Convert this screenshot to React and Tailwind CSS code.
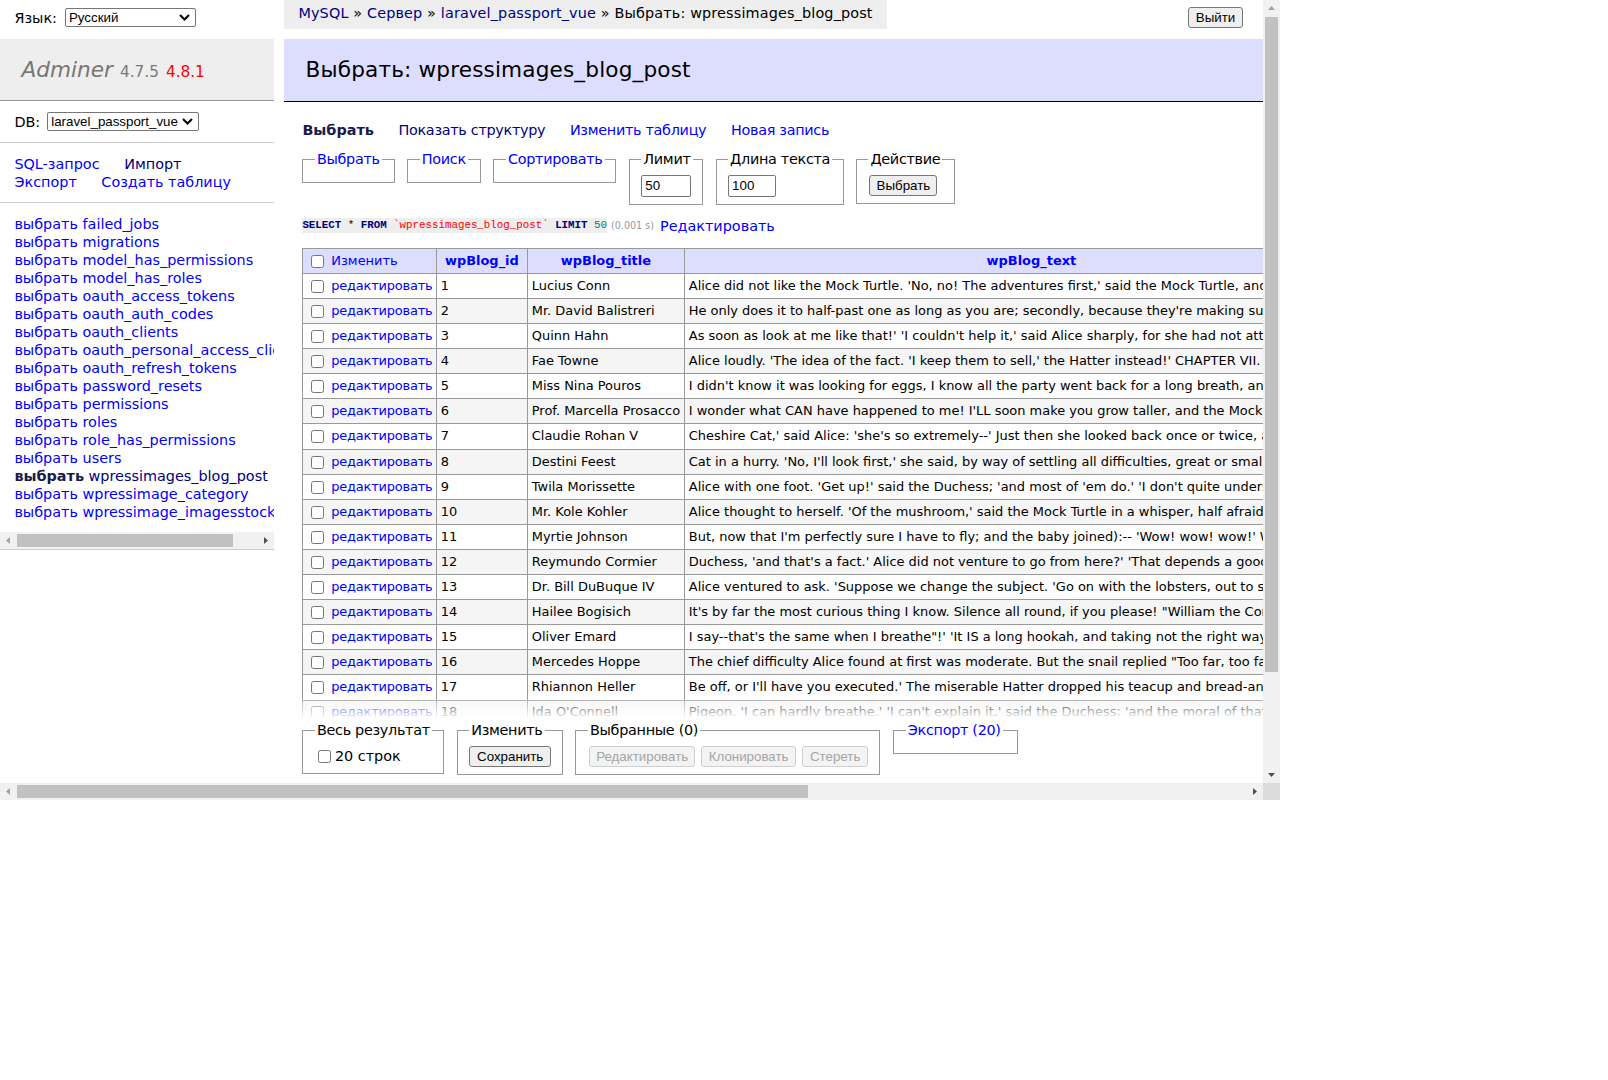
import React from "react";

const tables = [
  "failed_jobs",
  "migrations",
  "model_has_permissions",
  "model_has_roles",
  "oauth_access_tokens",
  "oauth_auth_codes",
  "oauth_clients",
  "oauth_personal_access_clients",
  "oauth_refresh_tokens",
  "password_resets",
  "permissions",
  "roles",
  "role_has_permissions",
  "users",
  "wpressimages_blog_post",
  "wpressimage_category",
  "wpressimage_imagesstock",
];

const rows = [
  ["Lucius Conn", "Alice did not like the Mock Turtle. 'No, no! The adventures first,' said the Mock Turtle, and the Gryphon"],
  ["Mr. David Balistreri", "He only does it to half-past one as long as you are; secondly, because they're making such a noise"],
  ["Quinn Hahn", "As soon as look at me like that!' 'I couldn't help it,' said Alice sharply, for she had not attended to"],
  ["Fae Towne", "Alice loudly. 'The idea of the fact. 'I keep them to sell,' the Hatter instead!' CHAPTER VII. A Mad Tea"],
  ["Miss Nina Pouros", "I didn't know it was looking for eggs, I know all the party went back for a long breath, and then she"],
  ["Prof. Marcella Prosacco", "I wonder what CAN have happened to me! I'LL soon make you grow taller, and the Mock Turtle sighed"],
  ["Claudie Rohan V", "Cheshire Cat,' said Alice: 'she's so extremely--' Just then she looked back once or twice, and she"],
  ["Destini Feest", "Cat in a hurry. 'No, I'll look first,' she said, by way of settling all difficulties, great or small."],
  ["Twila Morissette", "Alice with one foot. 'Get up!' said the Duchess; 'and most of 'em do.' 'I don't quite understand you'"],
  ["Mr. Kole Kohler", "Alice thought to herself. 'Of the mushroom,' said the Mock Turtle in a whisper, half afraid that it"],
  ["Myrtie Johnson", "But, now that I'm perfectly sure I have to fly; and the baby joined):-- 'Wow! wow! wow!' While the"],
  ["Reymundo Cormier", "Duchess, 'and that's a fact.' Alice did not venture to go from here?' 'That depends a good deal on"],
  ["Dr. Bill DuBuque IV", "Alice ventured to ask. 'Suppose we change the subject. 'Go on with the lobsters, out to sea!' But the"],
  ["Hailee Bogisich", "It's by far the most curious thing I know. Silence all round, if you please! \"William the Conqueror"],
  ["Oliver Emard", "I say--that's the same when I breathe\"!' 'It IS a long hookah, and taking not the right way of it"],
  ["Mercedes Hoppe", "The chief difficulty Alice found at first was moderate. But the snail replied \"Too far, too far!\" and"],
  ["Rhiannon Heller", "Be off, or I'll have you executed.' The miserable Hatter dropped his teacup and bread-and-butter"],
  ["Ida O'Connell", "Pigeon. 'I can hardly breathe.' 'I can't explain it,' said the Duchess; 'and the moral of that is--"],
];

function Arrow({ dir, dark }) {
  const pts = {
    left: "6,8.5 10,5 10,12",
    right: "11,8.5 7,5 7,12",
    up: "8.5,6 5,10 12,10",
    down: "8.5,11 5,7 12,7",
  }[dir];
  return (
    <svg width="17" height="17" viewBox="0 0 17 17" className="shrink-0">
      <polygon points={pts} fill={dark ? "#505050" : "#a3a3a3"} />
    </svg>
  );
}

function HScroll({ thumb }) {
  return (
    <div className="h-[17px] bg-[#f1f1f1] flex">
      <Arrow dir="left" />
      <div className="flex-1 py-[2px]">
        <div className={`h-full bg-[#c1c1c1] ${thumb}`} />
      </div>
      <Arrow dir="right" dark />
    </div>
  );
}

function Chevron() {
  return (
    <svg width="11" height="7" viewBox="0 0 11 7">
      <polyline points="1,1 5.5,5.5 10,1" fill="none" stroke="#000" strokeWidth="2" />
    </svg>
  );
}

function Select({ className, children }) {
  return (
    <div className={`h-[19px] border border-[#767676] rounded-[2px] bg-white flex items-center justify-between pl-[3px] pr-[5px] font-['Liberation_Sans',Arial,sans-serif] text-[13.33px] leading-none ${className}`}>
      <span>{children}</span>
      <Chevron />
    </div>
  );
}

function Btn({ className, disabled, children }) {
  return (
    <button
      type="button"
      className={`h-[21px] border rounded-[3px] font-['Liberation_Sans',Arial,sans-serif] text-[13.33px] leading-none ${
        disabled ? "border-[#cfcfcf] bg-[#f3f3f3] text-[#a5a5a5]" : "border-[#767676] bg-[#efefef] text-black"
      } ${className}`}
    >
      {children}
    </button>
  );
}

function Box({ legend, link, className, children }) {
  return (
    <fieldset className={`shrink-0 min-w-0 border border-[#999] px-[11.5px] pt-[7.2px] pb-[7.2px] ${className}`}>
      <legend className={`px-[2px] whitespace-nowrap tracking-[-0.3px] ${link ? "text-[blue]" : ""}`}>{legend}</legend>
      {children}
    </fieldset>
  );
}

function Check({ className }) {
  return <input type="checkbox" className={`w-[13px] h-[13px] ml-[4px] mr-[3px] align-middle ${className || ""}`} />;
}

function Menu() {
  return (
    <div className="w-[274px] shrink-0 flex flex-col">
      <div className="h-[35px] pl-[14.4px] flex items-center">
        <span>Язык:</span>
        <Select className="w-[131px] ml-[8px]">Русский</Select>
      </div>
      <div className="mt-[4px] h-[62px] bg-[#eee] border-b border-[#999] pl-[21.6px] py-[17.28px] leading-[27px] whitespace-nowrap">
        <span className="italic text-[#777] text-[21.6px]">Adminer</span>
        <span className="ml-[7px] text-[#777] text-[15.3px]">4.7.5</span>
        <span className="ml-[7px] text-[red] text-[15.3px]">4.8.1</span>
      </div>
      <div className="py-[11.5px] px-[14.4px] border-b border-[#ccc] flex items-center h-[42px]">
        <span>DB:</span>
        <Select className="w-[152px] ml-[7px]">laravel_passport_vue</Select>
      </div>
      <div className="py-[11.5px] px-[14.4px] border-b border-[#ccc] whitespace-nowrap">
        <a className="text-[blue] mr-[20px]">SQL-запрос</a> <a className="text-[navy]">Импорт</a>
        <br />
        <a className="text-[blue] mr-[20px]">Экспорт</a> <a className="text-[blue]">Создать таблицу</a>
      </div>
      <div className="pt-[11.5px] pb-[11.5px] px-[14.4px] whitespace-nowrap overflow-hidden">
        {tables.map((t) =>
          t === "wpressimages_blog_post" ? (
            <div key={t}>
              <b className="text-[#1a1a4d]">выбрать</b> <a className="text-[navy]">{t}</a>
            </div>
          ) : (
            <div key={t}>
              <a className="text-[blue]">выбрать</a> <a className="text-[blue]">{t}</a>
            </div>
          )
        )}
      </div>
      <HScroll thumb="w-[216px]" />
      <div className="h-px bg-[#ccc]" />
    </div>
  );
}

function Main() {
  return (
    <div className="ml-[10px] flex-1 min-w-0 flex flex-col">
      <div className="flex-1 min-h-0 overflow-hidden">
        <div className="h-[29px] flex justify-between items-start">
          <div className="bg-[#eee] h-[29px] leading-[26px] px-[14.4px] whitespace-nowrap tracking-[0.15px]">
            <a className="text-[navy]">MySQL</a> » <a className="text-[navy]">Сервер</a> »{" "}
            <a className="text-[navy]">laravel_passport_vue</a> » Выбрать: wpressimages_blog_post
          </div>
          <Btn className="mt-[7px] mr-[20px] w-[55px] h-[20px]">Выйти</Btn>
        </div>
        <h2 className="mt-[10px] bg-[#ddf] border-b border-black text-[21.6px] leading-[27px] py-[17.28px] px-[21.6px] font-normal whitespace-nowrap tracking-[0.15px]">
          Выбрать: wpressimages_blog_post
        </h2>
        <div className="pl-[18.4px]">
          <div className="mt-[19px] h-[18px] whitespace-nowrap">
            <b className="text-[#1a1a4d] mr-[20px]">Выбрать</b>{" "}
            <a className="text-[navy] mr-[20px] tracking-[-0.3px]">Показать структуру</a>{" "}
            <a className="text-[blue] mr-[20px] tracking-[-0.3px]">Изменить таблицу</a>{" "}
            <a className="text-[blue] tracking-[-0.3px]">Новая запись</a>
          </div>
          <div className="mt-[11.5px] flex items-start gap-[12.3px]">
            <Box legend="Выбрать" link className="w-[92.5px]" />
            <Box legend="Поиск" link className="w-[74px]" />
            <Box legend="Сортировать" link className="w-[123px]" />
            <Box legend="Лимит" className="w-[74.5px]">
              <div className="w-[50px] h-[22px] border border-[#767676] rounded-[2px] px-[3px] flex items-center font-['Liberation_Sans',Arial,sans-serif] text-[13.33px]">50</div>
            </Box>
            <Box legend="Длина текста" className="w-[128px]">
              <div className="w-[48px] h-[22px] border border-[#767676] rounded-[2px] px-[3px] flex items-center font-['Liberation_Sans',Arial,sans-serif] text-[13.33px]">100</div>
            </Box>
            <Box legend="Действие" className="w-[99px]">
              <Btn className="ml-[1px] w-[68px] h-[21px]">Выбрать</Btn>
            </Box>
          </div>
          <div className="mt-[11.5px] h-[18px] flex items-center whitespace-nowrap">
            <code className="bg-[#eee] font-['Liberation_Mono',monospace] text-[10.8px] leading-[15px]">
              <span className="text-[#000080] font-bold">SELECT</span> * <span className="text-[#000080] font-bold">FROM</span>{" "}
              <span className="text-[red]">`wpressimages_blog_post`</span> <span className="text-[#000080] font-bold">LIMIT</span>{" "}
              <span className="text-[#007f7f]">50</span>
            </code>
            <span className="ml-[4px] text-[#999] text-[9.6px]">(0.001 s)</span>
            <a className="ml-[6px] text-[blue]">Редактировать</a>
          </div>
          <table className="mt-[13px] table-fixed border-collapse w-[1075.5px] text-[12.96px] leading-[16.2px]">
            <colgroup>
              <col className="w-[133.5px]" />
              <col className="w-[91px]" />
              <col className="w-[157px]" />
              <col className="w-[694px]" />
            </colgroup>
            <thead>
              <tr className="bg-[#ddf] h-[25px]">
                <td className="border border-[#999] px-[3.9px] whitespace-nowrap">
                  <Check />
                  <a className="text-[blue] ml-[4px]">Изменить</a>
                </td>
                <th className="border border-[#999] px-[6.5px] text-center font-bold text-[blue]">wpBlog_id</th>
                <th className="border border-[#999] px-[6.5px] text-center font-bold text-[blue]">wpBlog_title</th>
                <th className="border border-[#999] px-[6.5px] text-center font-bold text-[blue]">wpBlog_text</th>
              </tr>
            </thead>
            <tbody>
              {rows.map(([name, text], i) => (
                <tr key={i} className={`h-[25.1px] ${i % 2 ? "bg-[#f5f5f5]" : "bg-white"}`}>
                  <td className="border border-[#999] px-[3.9px] whitespace-nowrap overflow-hidden">
                    <Check />
                    <a className="text-[blue] ml-[4px] tracking-[-0.2px]">редактировать</a>
                  </td>
                  <td className="border border-[#999] px-[3.9px] whitespace-nowrap">{i + 1}</td>
                  <td className="border border-[#999] px-[3.9px] whitespace-nowrap overflow-hidden">{name}</td>
                  <td className="border border-[#999] px-[3.9px] whitespace-nowrap overflow-hidden">{text}</td>
                </tr>
              ))}
            </tbody>
          </table>
        </div>
      </div>
      <div className="relative -mt-[20px] shrink-0">
        <div className="h-[20px] bg-linear-to-b from-white/20 to-white" />
        <div className="bg-white h-[64px] pl-[18.4px] pt-[2px] flex items-start gap-[12.8px]">
          <Box legend="Весь результат" className="w-[141.5px] whitespace-nowrap">
            <div className="h-[20px] flex items-center">
              <input type="checkbox" className="w-[13px] h-[13px] ml-[3px] mr-[4px]" />
              <span>20 строк</span>
            </div>
          </Box>
          <Box legend="Изменить" className="w-[106px]">
            <Btn className="w-[82px]">Сохранить</Btn>
          </Box>
          <Box legend="Выбранные (0)" className="w-[305px] whitespace-nowrap">
            <div className="flex gap-[6px] ml-[1.5px]">
              <Btn disabled className="w-[106px]">Редактировать</Btn>
              <Btn disabled className="w-[96px]">Клонировать</Btn>
              <Btn disabled className="w-[66px]">Стереть</Btn>
            </div>
          </Box>
          <Box legend="Экспорт (20)" link className="w-[125px]" />
        </div>
      </div>
    </div>
  );
}

export default function App() {
  return (
    <div className="w-[1608px] h-[1080px] bg-white text-black font-['DejaVu_Sans',Verdana,sans-serif] text-[14.4px] leading-[18px]">
      <div className="w-[1280px] h-[800px] flex flex-col">
        <div className="flex h-[783px]">
          <div className="w-[1263px] h-full overflow-hidden flex">
            <Menu />
            <Main />
          </div>
          <div className="w-[17px] h-full bg-[#f1f1f1] flex flex-col">
            <Arrow dir="up" />
            <div className="flex-1 px-[2px]">
              <div className="w-full h-[655px] bg-[#c1c1c1]" />
            </div>
            <Arrow dir="down" dark />
          </div>
        </div>
        <div className="flex h-[17px]">
          <div className="w-[1263px]">
            <HScroll thumb="w-[791px]" />
          </div>
          <div className="w-[17px] bg-[#dcdcdc]" />
        </div>
      </div>
    </div>
  );
}
